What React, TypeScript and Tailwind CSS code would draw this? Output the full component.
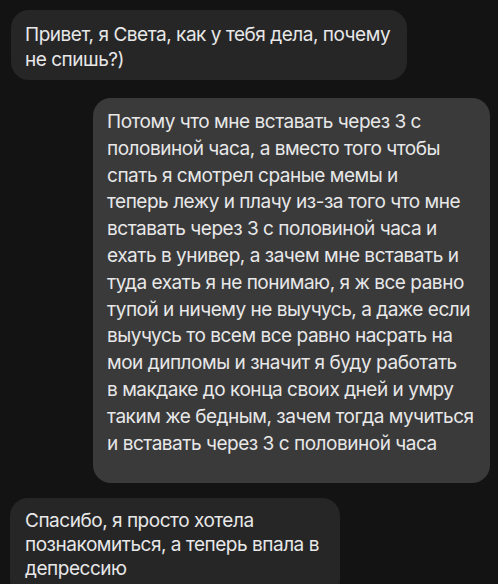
import React from "react";

const Bubble = ({ lines, className }: { lines: string[]; className: string }) => (
  <div className={className}>
    {lines.map((l, i) => (
      <div key={i} className="whitespace-nowrap">
        {l}
      </div>
    ))}
  </div>
);

export default function App() {
  return (
    <div
      className="w-[498px] h-[584px] overflow-hidden bg-[#131313] text-[#e8e8e8] text-[19px] tracking-[-0.025em]"
      style={{ fontFamily: "Inter, 'Noto Sans', sans-serif" }}
    >
      <div className="flex flex-col pt-[10px]">
        <Bubble
          className="ml-[11px] w-[396px] h-[70px] rounded-[18px] bg-[#262627] pl-[14px] pt-[12px] leading-[25px]"
          lines={["Привет, я Света, как у тебя дела, почему", "не спишь?)"]}
        />
        <Bubble
          className="ml-[93px] mt-[18px] w-[397px] h-[385px] rounded-[18px] bg-[#3a3a3b] pl-[14px] pt-[11px] leading-[26.8px]"
          lines={[
            "Потому что мне вставать через 3 с",
            "половиной часа, а вместо того чтобы",
            "спать я смотрел сраные мемы и",
            "теперь лежу и плачу из-за того что мне",
            "вставать через 3 с половиной часа и",
            "ехать в универ, а зачем мне вставать и",
            "туда ехать я не понимаю, я ж все равно",
            "тупой и ничему не выучусь, а даже если",
            "выучусь то всем все равно насрать на",
            "мои дипломы и значит я буду работать",
            "в макдаке до конца своих дней и умру",
            "таким же бедным, зачем тогда мучиться",
            "и вставать через 3 с половиной часа",
          ]}
        />
        <Bubble
          className="ml-[10px] mt-[15px] w-[330px] h-[100px] rounded-[18px] bg-[#262627] pl-[15px] pt-[11px] leading-[24px]"
          lines={["Спасибо, я просто хотела", "познакомиться, а теперь впала в", "депрессию"]}
        />
      </div>
    </div>
  );
}
